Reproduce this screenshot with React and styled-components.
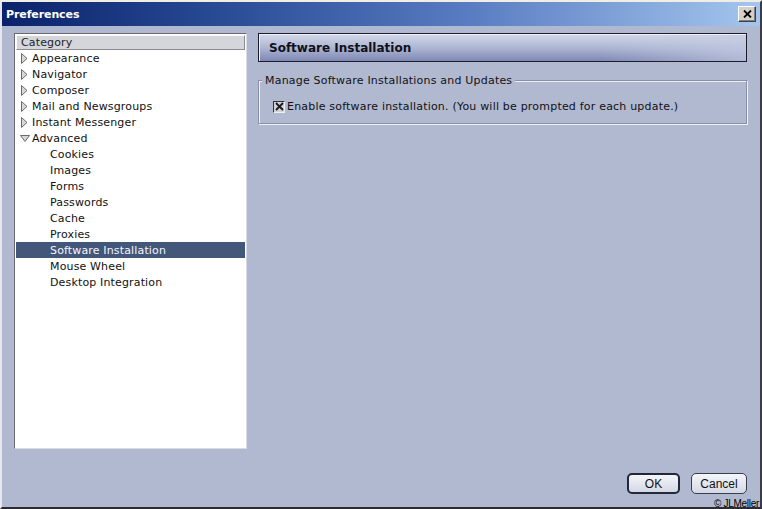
import React from 'react'
import styled, { createGlobalStyle } from 'styled-components'

const GlobalStyle = createGlobalStyle`
  html, body {
    margin: 0;
    padding: 0;
    width: 762px;
    height: 509px;
    overflow: hidden;
    background: #b1b9d1;
  }
  * { box-sizing: border-box; }
`

const categories = [
  { label: 'Appearance', level: 0, twisty: 'closed' },
  { label: 'Navigator', level: 0, twisty: 'closed' },
  { label: 'Composer', level: 0, twisty: 'closed' },
  { label: 'Mail and Newsgroups', level: 0, twisty: 'closed' },
  { label: 'Instant Messenger', level: 0, twisty: 'closed' },
  { label: 'Advanced', level: 0, twisty: 'open' },
  { label: 'Cookies', level: 1 },
  { label: 'Images', level: 1 },
  { label: 'Forms', level: 1 },
  { label: 'Passwords', level: 1 },
  { label: 'Cache', level: 1 },
  { label: 'Proxies', level: 1 },
  { label: 'Software Installation', level: 1, selected: true },
  { label: 'Mouse Wheel', level: 1 },
  { label: 'Desktop Integration', level: 1 },
]

const Twisty = ({ open }) => (
  <TwistyBox>
    {open ? (
      <svg width="10" height="9" viewBox="0 0 10 9">
        <path d="M0.5 1.5 L9.5 1.5 L5 7.5 Z" fill="#d8d8d8" stroke="#6a6a6a" />
      </svg>
    ) : (
      <svg width="8" height="11" viewBox="0 0 8 11">
        <path d="M1.5 0.5 L7 5.5 L1.5 10.5 Z" fill="#d8d8d8" stroke="#6a6a6a" />
      </svg>
    )}
  </TwistyBox>
)

const App = () => {
  return (
    <Window>
      <GlobalStyle />
      <TitleBar>
        <Title>Preferences</Title>
        <CloseButton>
          <svg width="9" height="8" viewBox="0 0 9 8">
            <path d="M1 0.5 L8 7.5 M8 0.5 L1 7.5" stroke="#000" strokeWidth="1.8" />
          </svg>
        </CloseButton>
      </TitleBar>
      <Body>
        <Content>
          <Tree>
            <TreeHeader>Category</TreeHeader>
            {categories.map((c) => (
              <TreeRow key={c.label} $level={c.level} $selected={c.selected}>
                {c.twisty && <Twisty open={c.twisty === 'open'} />}
                {c.label}
              </TreeRow>
            ))}
          </Tree>
          <Pane>
            <PaneHeader>Software Installation</PaneHeader>
            <GroupBox>
              <Legend>Manage Software Installations and Updates</Legend>
              <CheckRow>
                <CheckBox>
                  <svg width="9" height="9" viewBox="0 0 9 9">
                    <path d="M1 1 L8 8 M8 1 L1 8" stroke="#1a1a1a" strokeWidth="1.8" />
                  </svg>
                </CheckBox>
                Enable software installation. (You will be prompted for each update.)
              </CheckRow>
            </GroupBox>
          </Pane>
        </Content>
        <Footer>
          <Button $default>OK</Button>
          <Button>Cancel</Button>
        </Footer>
        <Credit>© JLMeller</Credit>
      </Body>
    </Window>
  )
}

const Window = styled.div`
  position: relative;
  width: 762px;
  height: 509px;
  display: flex;
  flex-direction: column;
  background: #b1b9d1;
  border-top: 2px solid #f1eee6;
  border-left: 2px solid #e8e6ee;
  border-right: 2px solid #3c3c44;
  border-bottom: 2px solid #2c2c30;
  font-family: 'DejaVu Sans', Verdana, sans-serif;
  color: #000;
`

const TitleBar = styled.div`
  height: 24px;
  display: flex;
  align-items: center;
  justify-content: space-between;
  padding: 0 4px 0 4px;
  background: linear-gradient(to right, #0a226a 0%, #24468f 25%, #5679c0 60%, #a4c6ee 100%);
`

const Title = styled.div`
  color: #fff;
  font-family: 'DejaVu Sans', Tahoma, sans-serif;
  font-weight: bold;
  font-size: 11px;
  letter-spacing: -0.1px;
`

const CloseButton = styled.div`
  width: 18px;
  height: 16px;
  display: flex;
  align-items: center;
  justify-content: center;
  background: #d4d0c8;
  border: 1px solid;
  border-color: #fff #404040 #404040 #fff;
  box-shadow: inset -1px -1px 0 #808080;
`

const Body = styled.div`
  flex: 1;
  display: flex;
  flex-direction: column;
  padding: 7px 13px 0 12px;
`

const Content = styled.div`
  display: flex;
  gap: 11px;
`

const Tree = styled.div`
  width: 233px;
  height: 416px;
  background: #fff;
  border: 1px solid;
  border-color: #6a6a72 #d8dae4 #d8dae4 #6a6a72;
  padding: 1px;
  font-size: 11px;
`

const TreeHeader = styled.div`
  height: 15px;
  line-height: 14px;
  padding-left: 4px;
  background: #d4d6dc;
  border: 1px solid;
  border-color: #fafafa #8a8a90 #8a8a90 #fafafa;
  color: #222;
  letter-spacing: 0.15px;
`

const TwistyBox = styled.span`
  display: inline-flex;
  width: 12px;
  justify-content: flex-start;
  align-items: center;
`

const TreeRow = styled.div`
  height: 16px;
  display: flex;
  align-items: center;
  padding-left: ${(p) => (p.$level ? 34 : 4)}px;
  background: ${(p) => (p.$selected ? '#42577a' : 'transparent')};
  color: ${(p) => (p.$selected ? '#f4f6fa' : '#111')};
  letter-spacing: 0.15px;
  white-space: nowrap;
`

const Pane = styled.div`
  flex: 1;
  display: flex;
  flex-direction: column;
  gap: 18px;
`

const PaneHeader = styled.div`
  height: 29px;
  display: flex;
  align-items: center;
  padding-left: 10px;
  border: 1px solid #1c1c2c;
  box-shadow: inset 1px 1px 0 #eef0f6;
  background:
    linear-gradient(to right, rgba(176, 186, 214, 0) 70%, rgba(196, 204, 228, 0.7) 100%),
    linear-gradient(to bottom, #d4d8e8 0%, #aab2d0 55%, #7e88b2 100%);
  font-weight: bold;
  font-size: 12px;
  color: #10101c;
`

const GroupBox = styled.div`
  position: relative;
  height: 44px;
  border: 1px solid #8a90a8;
  box-shadow: 1px 1px 0 #eef0f8, inset 1px 1px 0 #eef0f8;
  padding: 19px 0 0 14px;
`

const Legend = styled.div`
  position: absolute;
  top: -7px;
  left: 3px;
  padding: 0 3px;
  background: #b1b9d1;
  font-size: 11px;
  letter-spacing: 0.2px;
  color: #111;
`

const CheckRow = styled.div`
  display: flex;
  align-items: center;
  gap: 2px;
  font-size: 11px;
  letter-spacing: 0.2px;
  color: #111;
`

const CheckBox = styled.span`
  width: 12px;
  height: 12px;
  display: inline-flex;
  align-items: center;
  justify-content: center;
  background: #d0d2d8;
  border: 1px solid;
  border-color: #303038 #f0f0f4 #f0f0f4 #303038;
`

const Footer = styled.div`
  display: flex;
  justify-content: flex-end;
  gap: 11px;
  padding-top: 24px;
`

const Button = styled.div`
  height: 21px;
  min-width: ${(p) => (p.$default ? 53 : 56)}px;
  padding: 0 8px;
  display: flex;
  align-items: center;
  justify-content: center;
  border-radius: 5px;
  border: ${(p) => (p.$default ? '2px solid #22283a' : '1px solid #3a3e50')};
  background: linear-gradient(to bottom, #f4f6fa, #d4d8e4);
  font-family: 'Liberation Sans', Arial, sans-serif;
  font-size: 12px;
  color: #111;
`

const Credit = styled.div`
  position: absolute;
  right: 1px;
  bottom: -2px;
  font-family: 'Liberation Sans', Arial, sans-serif;
  font-size: 10px;
  letter-spacing: -0.3px;
  color: #000;
`

export default App
